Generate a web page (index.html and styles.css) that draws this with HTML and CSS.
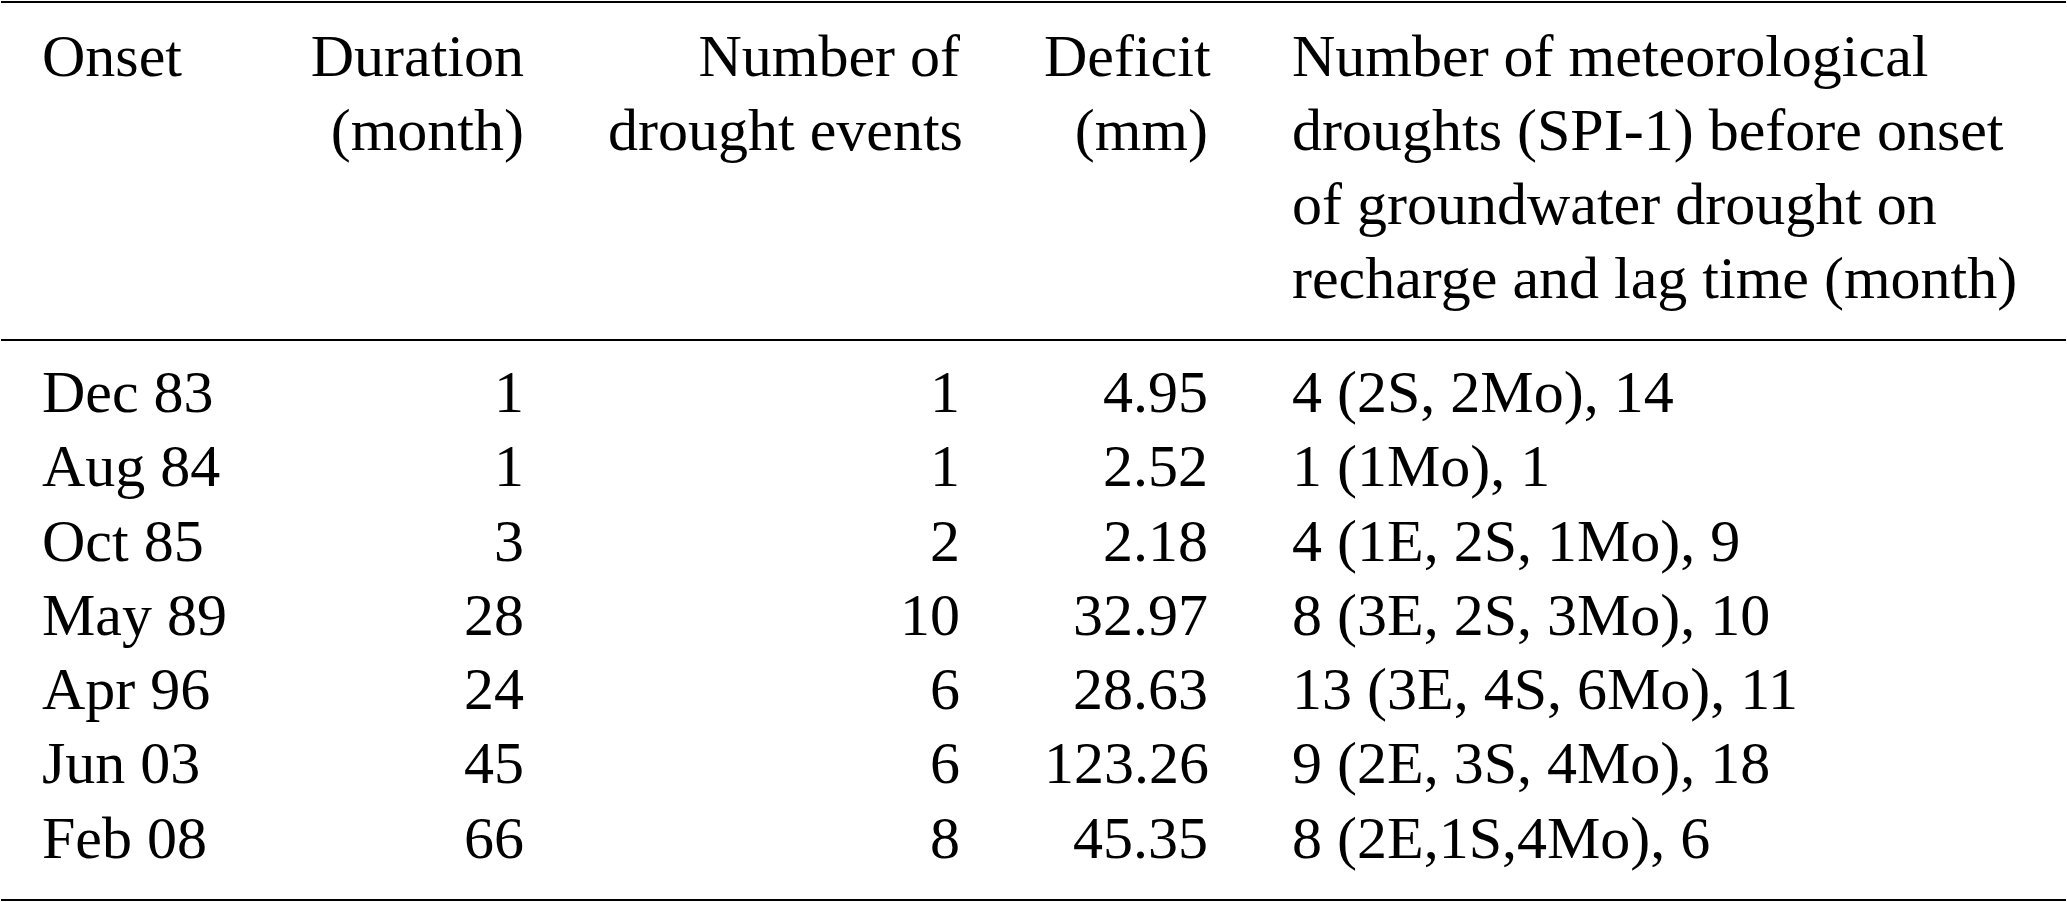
FILE: index.html
```html
<!DOCTYPE html>
<html lang="en">
<head>
<meta charset="utf-8">
<title>Groundwater drought events</title>
<link rel="stylesheet" href="styles.css">
</head>
<body>
<table class="drought-table">
  <colgroup>
    <col class="c-onset">
    <col class="c-duration">
    <col class="c-events">
    <col class="c-deficit">
    <col class="c-met">
  </colgroup>
  <thead>
    <tr>
      <th class="left">Onset</th>
      <th class="right">Duration<br>(month)</th>
      <th class="right">Number of<br>drought events</th>
      <th class="right">Deficit<br>(mm)</th>
      <th class="left">Number of meteorological<br>droughts (SPI-1) before onset<br>of groundwater drought on<br>recharge and lag time (month)</th>
    </tr>
  </thead>
  <tbody>
    <tr>
      <td class="left">Dec 83</td><td class="right">1</td><td class="right">1</td><td class="right">4.95</td><td class="left">4 (2S, 2Mo), 14</td>
    </tr>
    <tr>
      <td class="left">Aug 84</td><td class="right">1</td><td class="right">1</td><td class="right">2.52</td><td class="left">1 (1Mo), 1</td>
    </tr>
    <tr>
      <td class="left">Oct 85</td><td class="right">3</td><td class="right">2</td><td class="right">2.18</td><td class="left">4 (1E, 2S, 1Mo), 9</td>
    </tr>
    <tr>
      <td class="left">May 89</td><td class="right">28</td><td class="right">10</td><td class="right">32.97</td><td class="left">8 (3E, 2S, 3Mo), 10</td>
    </tr>
    <tr>
      <td class="left">Apr 96</td><td class="right">24</td><td class="right">6</td><td class="right">28.63</td><td class="left">13 (3E, 4S, 6Mo), 11</td>
    </tr>
    <tr>
      <td class="left">Jun 03</td><td class="right">45</td><td class="right">6</td><td class="right">123.26</td><td class="left">9 (2E, 3S, 4Mo), 18</td>
    </tr>
    <tr>
      <td class="left">Feb 08</td><td class="right">66</td><td class="right">8</td><td class="right">45.35</td><td class="left">8 (2E,1S,4Mo), 6</td>
    </tr>
  </tbody>
</table>
</body>
</html>
```

FILE: styles.css
```css
html, body {
  margin: 0;
  padding: 0;
  background: #ffffff;
}

body {
  font-family: "Liberation Serif", "Times New Roman", serif;
  font-size: 60px;
  color: #000000;
}

.drought-table {
  margin: 1px 1px 0 1px;
  width: 2065px;
  table-layout: fixed;
  border-collapse: collapse;
  border-top: 2px solid #000;
  border-bottom: 2px solid #000;
}

.c-onset { width: 267px; }
.c-duration { width: 298px; }
.c-events { width: 436px; }
.c-deficit { width: 248px; }
.c-met { width: 816px; }

.drought-table th,
.drought-table td {
  font-weight: normal;
  vertical-align: top;
  white-space: nowrap;
  padding: 0 42px;
  line-height: 74.25px;
}

.drought-table th {
  line-height: 74px;
  padding-top: 16px;
  padding-bottom: 24px;
}

.drought-table thead tr {
  border-bottom: 2px solid #000;
}

.drought-table th.left:first-child,
.drought-table td.left:first-child {
  padding-left: 41px;
}

.drought-table tbody tr:first-child td {
  padding-top: 14px;
}

.drought-table tbody tr:last-child td {
  padding-bottom: 24px;
}

.left { text-align: left; }
.right { text-align: right; }
```
